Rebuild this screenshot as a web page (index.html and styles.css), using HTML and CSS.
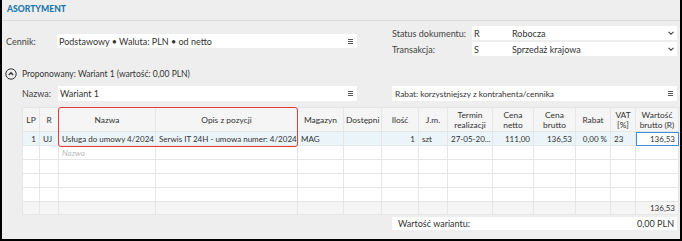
FILE: index.html
```html
<!DOCTYPE html>
<html lang="pl">
<head>
  <meta charset="UTF-8">
  <title>Asortyment</title>
  <link rel="stylesheet" href="styles.css">
</head>
<body>
  <div class="panel">
    <div class="title">ASORTYMENT</div>

    <div class="top">
      <div class="field">
        <span class="label cennik">Cennik:</span>
        <div class="box cennik-box">
          <span class="grow">Podstawowy • Waluta: PLN • od netto</span>
          <svg class="menu" width="5" height="5" viewBox="0 0 5 5"><path d="M0 0.5h5M0 2.5h5M0 4.5h5" stroke="#555" stroke-width="1"/></svg>
        </div>
      </div>
      <div class="right">
        <div class="field">
          <span class="label status">Status dokumentu:</span>
          <div class="box select">
            <span class="code">R</span>
            <span class="grow">Robocza</span>
            <svg class="chev" width="6" height="4" viewBox="0 0 6 4"><path d="M0.5 0.8L3 3.2L5.5 0.8" fill="none" stroke="#444" stroke-width="1.1"/></svg>
          </div>
        </div>
        <div class="field">
          <span class="label status">Transakcja:</span>
          <div class="box select">
            <span class="code">S</span>
            <span class="grow">Sprzedaż krajowa</span>
            <svg class="chev" width="6" height="4" viewBox="0 0 6 4"><path d="M0.5 0.8L3 3.2L5.5 0.8" fill="none" stroke="#444" stroke-width="1.1"/></svg>
          </div>
        </div>
      </div>
    </div>

    <div class="variant-head">
      <svg class="toggle" width="12" height="12" viewBox="0 0 12 12"><circle cx="6" cy="6" r="5.2" fill="none" stroke="#333" stroke-width="1"/><path d="M3.8 7L6 4.8L8.2 7" fill="none" stroke="#333" stroke-width="1.4"/></svg>
      <span>Proponowany: Wariant 1 (wartość: 0,00 PLN)</span>
    </div>

    <div class="variant-row">
      <div class="field">
        <span class="label nazwa">Nazwa:</span>
        <div class="box nazwa-box">
          <span class="grow">Wariant 1</span>
          <svg class="menu" width="5" height="5" viewBox="0 0 5 5"><path d="M0 0.5h5M0 2.5h5M0 4.5h5" stroke="#555" stroke-width="1"/></svg>
        </div>
      </div>
      <div class="box rabat-box">
        <span class="grow">Rabat: korzystniejszy z kontrahenta/cennika</span>
        <svg class="menu" width="5" height="5" viewBox="0 0 5 5"><path d="M0 0.5h5M0 2.5h5M0 4.5h5" stroke="#555" stroke-width="1"/></svg>
      </div>
    </div>

    <div class="grid-wrap">
      <table class="grid">
        <colgroup>
          <col style="width:17px"><col style="width:19px"><col style="width:97px"><col style="width:142px">
          <col style="width:46px"><col style="width:38px"><col style="width:37px"><col style="width:29px">
          <col style="width:45px"><col style="width:41px"><col style="width:42px"><col style="width:35px">
          <col style="width:25px"><col style="width:43px">
        </colgroup>
        <thead>
          <tr>
            <th>LP</th><th>R</th><th>Nazwa</th><th>Opis z pozycji</th><th>Magazyn</th>
            <th class="clip">Dostępni</th><th>Ilość</th><th>J.m.</th><th>Termin<br>realizacji</th>
            <th>Cena<br>netto</th><th>Cena<br>brutto</th><th>Rabat</th><th>VAT<br>[%]</th><th>Wartość<br>brutto (R)</th>
          </tr>
        </thead>
        <tbody>
          <tr class="active">
            <td class="num">1</td><td>UJ</td><td>Usługa do umowy 4/2024</td><td>Serwis IT 24H - umowa numer: 4/2024</td>
            <td>MAG</td><td></td><td class="num">1</td><td>szt</td><td>27-05-20...</td>
            <td class="num">111,00</td><td class="num">136,53</td><td class="num">0,00 %</td><td>23</td><td class="num selected">136,53</td>
          </tr>
          <tr>
            <td></td><td></td><td class="placeholder">Nazwa</td><td></td><td></td><td></td><td></td>
            <td></td><td></td><td></td><td></td><td></td><td></td><td></td>
          </tr>
          <tr><td></td><td></td><td></td><td></td><td></td><td></td><td></td><td></td><td></td><td></td><td></td><td></td><td></td><td></td></tr>
          <tr><td></td><td></td><td></td><td></td><td></td><td></td><td></td><td></td><td></td><td></td><td></td><td></td><td></td><td></td></tr>
          <tr><td></td><td></td><td></td><td></td><td></td><td></td><td></td><td></td><td></td><td></td><td></td><td></td><td></td><td></td></tr>
        </tbody>
        <tfoot>
          <tr><td></td><td></td><td></td><td></td><td></td><td></td><td></td><td></td><td></td><td></td><td></td><td></td><td></td><td class="num">136,53</td></tr>
        </tfoot>
      </table>
      <div class="highlight"></div>
    </div>

    <div class="summary">
      <span class="grow">Wartość wariantu:</span>
      <span>0,00 PLN</span>
    </div>
  </div>
</body>
</html>
```

FILE: styles.css
```css
/* Panel asortymentu */
body {
  margin: 0;
  font-family: Lato, "Noto Sans", sans-serif;
  font-size: 9px;
  color: #333;
}
.panel {
  width: 678px;
  height: 239px;
  border: 2px solid #000;
  border-top: 0;
  background: #eeeeee;
  overflow: hidden;
}
.title {
  height: 20px;
  line-height: 19px;
  padding-left: 5px;
  border-bottom: 1px solid #dcdcdc;
  color: #1b78ad;
  font-weight: 900;
  font-size: 8.6px;
}
.top {
  display: flex;
  justify-content: space-between;
  padding: 5px 3px 0 4px;
}
.field {
  display: flex;
  align-items: center;
}
.label {
  color: #444;
  white-space: nowrap;
}
.cennik { width: 51px; }
.status { width: 80px; }
.nazwa { width: 36px; }
.box {
  display: flex;
  align-items: center;
  height: 14px;
  background: #fff;
  padding: 0 4px 0 2px;
  box-sizing: border-box;
}
.grow {
  flex: 1;
  white-space: nowrap;
  overflow: hidden;
}
.cennik-box { width: 300px; }
.right {
  display: flex;
  flex-direction: column;
  gap: 2px;
}
.select {
  width: 205px;
  padding-right: 3px;
}
.code {
  width: 38px;
}
.variant-head {
  display: flex;
  align-items: center;
  gap: 5px;
  height: 12px;
  margin-top: 12px;
  padding-left: 3px;
  font-size: 8.5px;
}
.variant-row {
  display: flex;
  justify-content: space-between;
  margin-top: 6px;
  padding: 0 3px 0 20px;
}
.variant-row .box { height: 15px; }
.nazwa-box { width: 299px; }
.rabat-box {
  width: 285px;
  padding-left: 3px;
  font-size: 8.3px;
}

.grid-wrap {
  position: relative;
  margin: 6px 0 0 20px;
}
.grid {
  border-collapse: collapse;
  table-layout: fixed;
  width: 656px;
  font-size: 8.4px;
}
.grid th, .grid td {
  padding: 0 1px 0 3px;
  border: 1px solid #e6e6e6;
  white-space: nowrap;
  overflow: hidden;
  font-weight: normal;
  line-height: 10px;
}
.grid th {
  height: 23px;
  padding: 0 2px;
  background: #f5f5f5;
  text-align: center;
  color: #333;
}
.grid th.clip { text-align: left; }
.grid td {
  height: 13px;
  font-size: 8px;
  background: #fff;
}
.grid .active td { background: #eaf4f9; }
.grid td.num {
  text-align: right;
  padding: 0 3px 0 1px;
}
.grid td.selected {
  background: #fff;
  outline: 1px solid #3f8fd8;
  outline-offset: -1px;
}
.grid .placeholder {
  color: #bbb;
  font-style: italic;
}
.grid tfoot td {
  height: 12px;
  background: #f5f5f5;
  border-top: 1px solid #c9c9c9;
}
.highlight {
  position: absolute;
  left: 36px;
  top: 0;
  width: 238px;
  height: 38px;
  border: 1.5px solid #e53a3a;
  border-radius: 3px;
  pointer-events: none;
}
.summary {
  display: flex;
  align-items: center;
  width: 285px;
  height: 13px;
  margin: 2px 0 0 390px;
  padding: 0 3px 0 6px;
  box-sizing: border-box;
  background: #fff;
}
```
